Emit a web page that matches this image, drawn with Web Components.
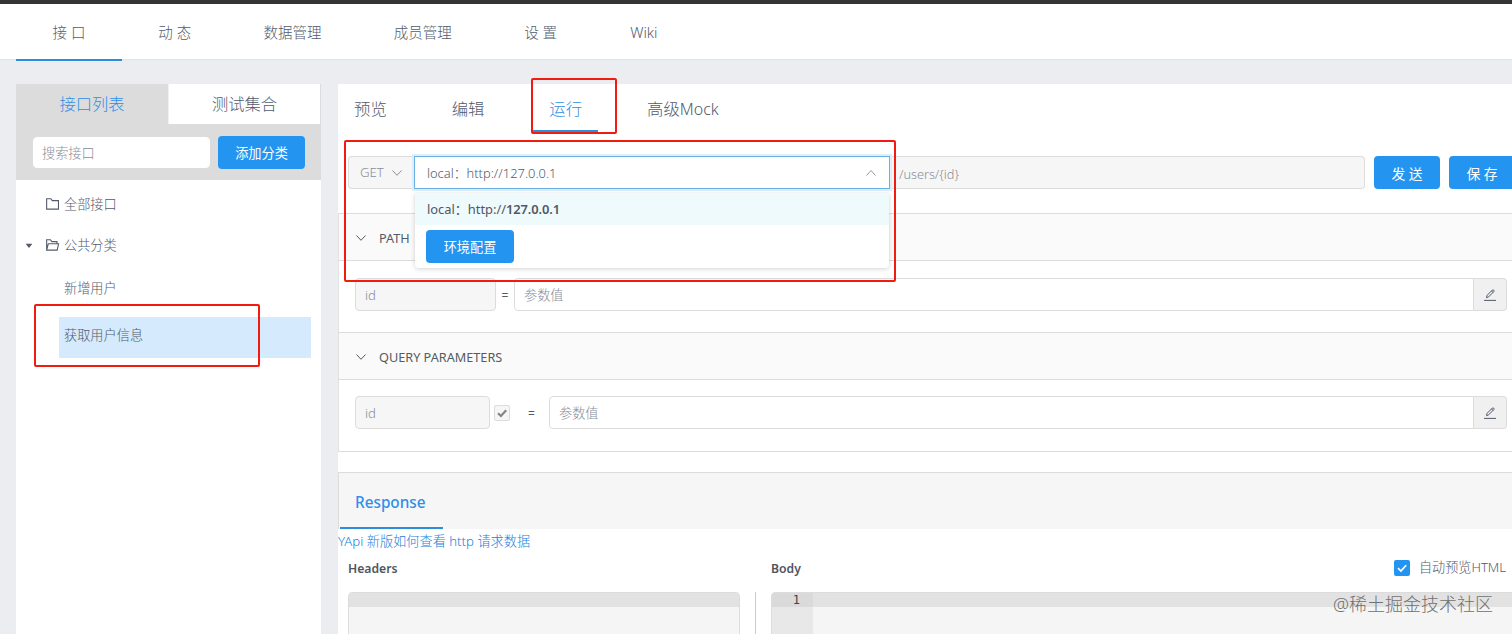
<!DOCTYPE html>
<html lang="zh">
<head>
<meta charset="utf-8">
<title>YApi</title>
<style>
  html, body {
    margin: 0;
    height: 100%;
    overflow: hidden;
  }
  body {
    background: #ebedf1;
    color: #525a6b;
    font-family: "Noto Sans", "Noto Sans CJK SC", sans-serif;
    font-size: 13.2px;
    font-weight: 300;
    line-height: 1;
  }
</style>
</head>
<body>
<yapi-page></yapi-page>

<script>
const ICONS = {
  down: '<path d="M1.5 3.5 6 8.300l4.500-4.800"/>',
  up: '<path d="M1.500 8.500 6 3.500l4.500 5"/>',
  folder: '<path d="M.6 10.300V.7h3.900l1.300 1.700h5.700v7.900z"/>',
  open: '<path d="M.6 10.300V.7h3.500l1.300 1.700h4.700v2M.6 10.300l1.500-5.900h9.500l-1.300 5.900z"/>',
  edit: '<path d="M0 11.400h12M2.500 8.700l.6-2.400L8.400 1c.8-.7 2.200.6 1.500 1.500L4.700 7.800z M7.500 1.900l1.500 1.500"/>',
  check: '<path d="M2 6.200 4.900 9l5.300-5.800" />',
  caret: '<path d="M1 2.500h10L6 9z" fill="currentColor" stroke="none"/>'
};

class UiIcon extends HTMLElement {
  constructor () {
    super();
    this.shadowDOM = this.attachShadow({mode: 'open'});
  }

  connectedCallback () {
    this.shadowDOM.innerHTML = `
    <style>
      :host {
        display: inline-block;
        flex: none;
        width: 12px;
        height: 12px;
      }
      svg {
        display: block;
        width: 100%;
        height: 100%;
        fill: none;
        stroke: currentColor;
        stroke-width: var(--stroke, 1);
        overflow: visible;
      }
    </style>
    <svg viewBox="0 0 12 12">${ICONS[this.getAttribute('name')]}</svg>
    `
  }
}
customElements.define('ui-icon', UiIcon);

class UiButton extends HTMLElement {
  constructor () {
    super();
    this.shadowDOM = this.attachShadow({mode: 'open'});
  }

  connectedCallback () {
    this.shadowDOM.innerHTML = `
    <style>
      :host {
        display: flex;
        align-items: center;
        justify-content: center;
        flex: none;
        box-sizing: border-box;
        height: 33px;
        padding-top: 2px;
        border-radius: 4px;
        background: #2395f1;
        color: #fff;
        font-weight: 400;
        white-space: nowrap;
      }
    </style>
    <slot></slot>
    `
  }
}
customElements.define('ui-button', UiButton);

class UiField extends HTMLElement {
  constructor () {
    super();
    this.shadowDOM = this.attachShadow({mode: 'open'});
  }

  connectedCallback () {
    this.shadowDOM.innerHTML = `
    <style>
      :host {
        display: flex;
        align-items: center;
        justify-content: space-between;
        box-sizing: border-box;
        height: 33px;
        padding: 3px 9px 0;
        border: 1px solid #dcdcdc;
        border-radius: 4px;
        background: #fff;
        color: #898e99;
        white-space: nowrap;
      }
      :host([disabled]) {
        background: #f6f6f6;
      }
    </style>
    <slot></slot>
    `
  }
}
customElements.define('ui-field', UiField);

class UiCheckbox extends HTMLElement {
  constructor () {
    super();
    this.shadowDOM = this.attachShadow({mode: 'open'});
  }

  connectedCallback () {
    this.shadowDOM.innerHTML = `
    <style>
      :host {
        display: flex;
        align-items: center;
        justify-content: center;
        flex: none;
        box-sizing: border-box;
        width: 16px;
        height: 16px;
        border-radius: 2px;
        background: #2395f1;
        color: #fff;
        --stroke: 1.7;
      }
      :host([disabled]) {
        border: 1px solid #dcdcdc;
        background: #f6f6f6;
        color: #858585;
        --stroke: 2.2;
      }
    </style>
    <ui-icon name="check"></ui-icon>
    `
  }
}
customElements.define('ui-checkbox', UiCheckbox);

class TopNav extends HTMLElement {
  constructor () {
    super();
    this.shadowDOM = this.attachShadow({mode: 'open'});
  }

  connectedCallback () {
    this.shadowDOM.innerHTML = `
    <style>
      :host {
        display: block;
        box-sizing: border-box;
        height: 59px;
        border-top: 4px solid #333436;
        padding-left: 16px;
        background: #fff;
        box-shadow: 0 1px 1px #e2e4e7;
      }
      nav {
        display: flex;
        font-size: 14.500px;
      }
      span {
        box-sizing: border-box;
        height: 57px;
        width: 105.500px;
        line-height: 56px;
        text-align: center;
        white-space: nowrap;
      }
      .wide {
        width: 130.2px;
      }
      .wiki {
        width: 101px;
        font-size: 14.700px;
      }
      .active {
        width: 106px;
        border-bottom: 2px solid #2b8ddb;
      }
    </style>
    <nav>
      <span class="active">接 口</span>
      <span>动 态</span>
      <span class="wide">数据管理</span>
      <span class="wide">成员管理</span>
      <span>设 置</span>
      <span class="wiki">Wiki</span>
    </nav>
    `
  }
}
customElements.define('top-nav', TopNav);

class SidePanel extends HTMLElement {
  constructor () {
    super();
    this.shadowDOM = this.attachShadow({mode: 'open'});
  }

  connectedCallback () {
    this.shadowDOM.innerHTML = `
    <style>
      :host {
        display: flex;
        flex-direction: column;
        flex: none;
        width: 305px;
        background: #fff;
      }
      .head {
        height: 96px;
        background: #dcdcdc;
      }
      .tabs {
        display: grid;
        grid-template-columns: 152px 152px;
        height: 40px;
        line-height: 40px;
        font-size: 16.3px;
        text-align: center;
      }
      .tabs .active {
        color: #2f8ee6;
      }
      .tabs .other {
        background: #fff;
        border-left: 1px solid #f0f0f0;
      }
      .search {
        display: flex;
        align-items: center;
        gap: 8px;
        padding: 12px 16px 0 17px;
      }
      .search ui-field {
        flex: 1;
        height: 31px;
        border-color: #fff;
        padding-left: 8px;
      }
      .search ui-button {
        width: 87px;
      }
      .tree {
        display: flex;
        flex-direction: column;
        padding: 4px 10px 0 7px;
      }
      .row {
        display: flex;
        align-items: center;
        height: 41px;
      }
      .row ui-icon {
        margin-right: 5px;
      }
      .row .folder {
        width: 13px;
        height: 13px;
      }
      .row .caret {
        width: 8px;
        height: 8px;
        margin: 0 13px 0 2px;
      }
      .leaf {
        margin: 2px 0 0 36px;
        padding-left: 5px;
      }
      .selected {
        box-sizing: border-box;
        margin-top: 8px;
        padding-bottom: 4px;
        background: #d5eafc;
      }
    </style>
    <div class="head">
      <div class="tabs">
        <span class="active">接口列表</span>
        <span class="other">测试集合</span>
      </div>
      <div class="search">
        <ui-field>搜索接口</ui-field>
        <ui-button>添加分类</ui-button>
      </div>
    </div>
    <div class="tree">
      <div class="row"><ui-icon class="folder" name="folder" style="margin-left: 23px"></ui-icon>全部接口</div>
      <div class="row"><ui-icon class="caret" name="caret"></ui-icon><ui-icon class="folder" name="open"></ui-icon>公共分类</div>
      <div class="row leaf">新增用户</div>
      <div class="row leaf selected">获取用户信息</div>
    </div>
    `
  }
}
customElements.define('side-panel', SidePanel);

class ParamPanel extends HTMLElement {
  constructor () {
    super();
    this.shadowDOM = this.attachShadow({mode: 'open'});
  }

  connectedCallback () {
    this.shadowDOM.innerHTML = `
    <style>
      :host {
        display: block;
        flex: none;
        box-sizing: border-box;
        border-top: 1px solid #dcdcdc;
        border-left: 1px solid #e2e2e2;
      }
      header {
        display: flex;
        align-items: center;
        box-sizing: border-box;
        gap: 12px;
        height: 47px;
        padding: 1px 0 0 16px;
        background: #fafafa;
        border-bottom: 1px solid #dcdcdc;
        font-size: 12.7px;
        font-weight: 400;
        color: #565b63;
      }
      header span {
        padding-top: 1px;
      }
      .body {
        display: flex;
        align-items: center;
        padding: var(--body-top, 17px) 5px 0 16px;
      }
    </style>
    <header><ui-icon name="down"></ui-icon><span>${this.getAttribute('heading')}</span></header>
    <div class="body"><slot></slot></div>
    `
  }
}
customElements.define('param-panel', ParamPanel);

class ValueInput extends HTMLElement {
  constructor () {
    super();
    this.shadowDOM = this.attachShadow({mode: 'open'});
  }

  connectedCallback () {
    this.shadowDOM.innerHTML = `
    <style>
      :host {
        display: flex;
        flex: 1;
      }
      ui-field {
        flex: 1;
        border-radius: 4px 0 0 4px;
      }
      .addon {
        display: flex;
        align-items: center;
        justify-content: center;
        box-sizing: border-box;
        width: 33px;
        border: 1px solid #dcdcdc;
        border-left: 0;
        border-radius: 0 4px 4px 0;
        background: #f0f0f0;
      }
    </style>
    <ui-field><slot></slot></ui-field>
    <div class="addon"><ui-icon name="edit"></ui-icon></div>
    `
  }
}
customElements.define('value-input', ValueInput);

class EnvSelect extends HTMLElement {
  constructor () {
    super();
    this.shadowDOM = this.attachShadow({mode: 'open'});
  }

  connectedCallback () {
    this.shadowDOM.innerHTML = `
    <style>
      :host {
        display: block;
        flex: none;
        position: relative;
        z-index: 1;
        width: 476px;
      }
      ui-field {
        padding: 1px 12px 0;
        border-color: #69b1e3;
        border-radius: 0;
        color: #525a6b;
        box-shadow: 0 0 0 2px #ddeefa;
      }
      .value {
        font-size: 12.900px;
      }
      ui-field ui-icon {
        color: #999;
      }
      .menu {
        position: absolute;
        top: 37px;
        left: 1px;
        width: 474px;
        height: 75px;
        background: #fff;
        border-radius: 0 0 4px 4px;
        box-shadow: 0 1px 5px rgba(0, 0, 0, .18);
      }
      .option {
        height: 32px;
        line-height: 32px;
        padding-left: 12px;
        background: #effafd;
        font-weight: 400;
        font-size: 12.900px;
        color: #505866;
      }
      .option b {
        font-weight: 600;
        letter-spacing: -.1px;
      }
      ui-button {
        width: 88px;
        margin: 5px 0 0 11px;
      }
    </style>
    <ui-field><span class="value">local：http://127.0.0.1</span><ui-icon name="up"></ui-icon></ui-field>
    <div class="menu">
      <div class="option"><span>local：http://<b>127.0.0.1</b></span></div>
      <ui-button>环境配置</ui-button>
    </div>
    `
  }
}
customElements.define('env-select', EnvSelect);

class RunPanel extends HTMLElement {
  constructor () {
    super();
    this.shadowDOM = this.attachShadow({mode: 'open'});
  }

  connectedCallback () {
    this.shadowDOM.innerHTML = `
    <style>
      :host {
        display: flex;
        flex-direction: column;
        flex: 1;
        min-width: 0;
        background: #fff;
      }
      .tabs {
        display: flex;
        flex: none;
        gap: 32.900px;
        height: 48px;
        line-height: 50px;
        font-size: 16.400px;
      }
      .tabs span {
        box-sizing: border-box;
        padding: 0 16px;
        white-space: nowrap;
      }
      .tabs .active {
        color: #2f8ee6;
        border-bottom: 2px solid #2b8ddb;
      }
      .tabs i {
        font-style: normal;
        font-size: 16px;
      }
      .request {
        display: flex;
        flex: none;
        height: 33px;
        padding: 24px 0 24px 10px;
      }
      .method {
        flex: none;
        width: 66px;
        padding: 1px 11px 0;
        border-right: 0;
        border-radius: 4px 0 0 4px;
      }
      .path {
        flex: none;
        width: 475px;
        border-left: 0;
        border-radius: 0 4px 4px 0;
        font-size: 12.700px;
      }
      .request ui-button {
        width: 66px;
        margin-left: 9px;
        font-size: 13.800px;
      }
      .first {
        height: 119px;
      }
      .second {
        height: 120px;
        border-bottom: 1px solid #dcdcdc;
      }
      .eq {
        text-align: center;
        font-weight: 400;
        font-size: 12px;
        padding-top: 2px;
      }
      response-view {
        flex: 1;
        margin-top: 20px;
      }
    </style>
    <div class="tabs">
      <span>预览</span>
      <span>编辑</span>
      <span class="active">运行</span>
      <span>高级<i>Mock</i></span>
    </div>
    <div class="request">
      <ui-field class="method" disabled><span>GET</span><ui-icon name="down"></ui-icon></ui-field>
      <env-select></env-select>
      <ui-field class="path" disabled><span>/users/{id}</span></ui-field>
      <ui-button>发 送</ui-button>
      <ui-button>保 存</ui-button>
    </div>
    <param-panel class="first" heading="PATH">
      <ui-field disabled style="width: 141px">id</ui-field>
      <span class="eq" style="width: 18px">=</span>
      <value-input>参数值</value-input>
    </param-panel>
    <param-panel class="second" heading="QUERY PARAMETERS" style="--body-top: 16px">
      <ui-field disabled style="width: 135px; margin-right: 4px">id</ui-field>
      <ui-checkbox disabled></ui-checkbox>
      <span class="eq" style="width: 39px; padding-left: 4px; box-sizing: border-box">=</span>
      <value-input>参数值</value-input>
    </param-panel>
    <response-view></response-view>
    `
  }
}

class CodeBox extends HTMLElement {
  constructor () {
    super();
    this.shadowDOM = this.attachShadow({mode: 'open'});
  }

  connectedCallback () {
    this.shadowDOM.innerHTML = `
    <style>
      :host {
        display: block;
        box-sizing: border-box;
        height: 60px;
        border: 1px solid #dcdcdc;
        border-radius: 4px 4px 0 0;
        background: #f5f5f5;
        overflow: hidden;
      }
      .line {
        height: 14px;
        background: #e2e2e2;
      }
      :host([numbered]) {
        background: linear-gradient(to right, #e8e8e8 41px, #f5f5f5 41px);
      }
      .line span {
        display: block;
        box-sizing: border-box;
        width: 41px;
        height: 14px;
        padding-right: 13px;
        background: #dadada;
        color: #444;
        font: 400 12px/15px "DejaVu Sans Mono", "Noto Sans", monospace;
        text-align: right;
      }
    </style>
    <div class="line">${this.hasAttribute('numbered') ? '<span>1</span>' : ''}</div>
    `
  }
}
customElements.define('code-box', CodeBox);

class ResponseView extends HTMLElement {
  constructor () {
    super();
    this.shadowDOM = this.attachShadow({mode: 'open'});
  }

  connectedCallback () {
    this.shadowDOM.innerHTML = `
    <style>
      :host {
        display: flex;
        flex-direction: column;
      }
      .bar {
        flex: none;
        box-sizing: border-box;
        height: 57px;
        padding-left: 1px;
        border-top: 1px solid #dcdcdc;
        border-left: 1px solid #dcdcdc;
        background: #f6f6f6;
      }
      .bar span {
        display: block;
        box-sizing: border-box;
        width: 103px;
        height: 56px;
        padding-left: 15px;
        border-bottom: 2px solid #2b8ddb;
        color: #2f8ee6;
        font-size: 15.300px;
        font-weight: 500;
        line-height: 59px;
      }
      .link {
        height: 24px;
        line-height: 24px;
        color: #2080dc;
      }
      .cols {
        display: flex;
        color: #50565f;
      }
      .title {
        display: flex;
        align-items: center;
        height: 32px;
        padding-bottom: 7px;
        font-weight: 600;
        font-size: 12.200px;
      }
      .left {
        width: 392px;
        padding: 0 15px 0 10px;
      }
      .right {
        flex: 1;
        padding-left: 15px;
      }
      .rule {
        width: 1px;
        margin-top: 39px;
        background: #ccc;
      }
      .right code-box {
        margin-right: -10px;
      }
      .preview {
        display: flex;
        align-items: center;
        gap: 9px;
        margin: -2px 0 0 auto;
        padding-right: 6px;
        font-size: 13.100px;
        font-weight: 300;
        color: #525a6b;
      }
    </style>
    <div class="bar"><span>Response</span></div>
    <div class="link"><span>YApi 新版如何查看 http 请求数据</span></div>
    <div class="cols">
      <div class="left">
        <div class="title">Headers</div>
        <code-box></code-box>
      </div>
      <div class="rule"></div>
      <div class="right">
        <div class="title">Body<div class="preview"><ui-checkbox></ui-checkbox><span>自动预览HTML</span></div></div>
        <code-box numbered></code-box>
      </div>
    </div>
    `
  }
}
customElements.define('response-view', ResponseView);
customElements.define('run-panel', RunPanel);

// red frame drawn over the page
class RedMark extends HTMLElement {
  constructor () {
    super();
    this.shadowDOM = this.attachShadow({mode: 'open'});
  }

  connectedCallback () {
    this.shadowDOM.innerHTML = `
    <style>
      :host {
        display: block;
        position: absolute;
        z-index: 5;
        box-sizing: border-box;
        border: 2px solid #f01c10;
        border-radius: 2px;
      }
    </style>
    `
  }
}
customElements.define('red-mark', RedMark);

class YapiPage extends HTMLElement {
  constructor () {
    super();
    this.shadowDOM = this.attachShadow({mode: 'open'});
  }

  connectedCallback () {
    this.shadowDOM.innerHTML = `
    <style>
      :host {
        display: flex;
        flex-direction: column;
        position: relative;
        height: 634px;
        overflow: hidden;
      }
      main {
        display: flex;
        gap: 17px;
        flex: 1;
        min-height: 0;
        padding: 25px 0 0 16px;
      }
      .watermark {
        position: absolute;
        z-index: 6;
        right: 19px;
        bottom: 21px;
        font-size: 18px;
        color: #707070;
        white-space: nowrap;
      }
    </style>
    <top-nav></top-nav>
    <main>
      <side-panel></side-panel>
      <run-panel></run-panel>
    </main>
    <red-mark style="left: 531px; top: 78px; width: 86px; height: 56px"></red-mark>
    <red-mark style="left: 344px; top: 140px; width: 552px; height: 142px"></red-mark>
    <red-mark style="left: 34px; top: 304px; width: 226px; height: 63px"></red-mark>
    <div class="watermark">@稀土掘金技术社区</div>
    `
  }
}
customElements.define('yapi-page', YapiPage);
</script>
</body>
</html>
